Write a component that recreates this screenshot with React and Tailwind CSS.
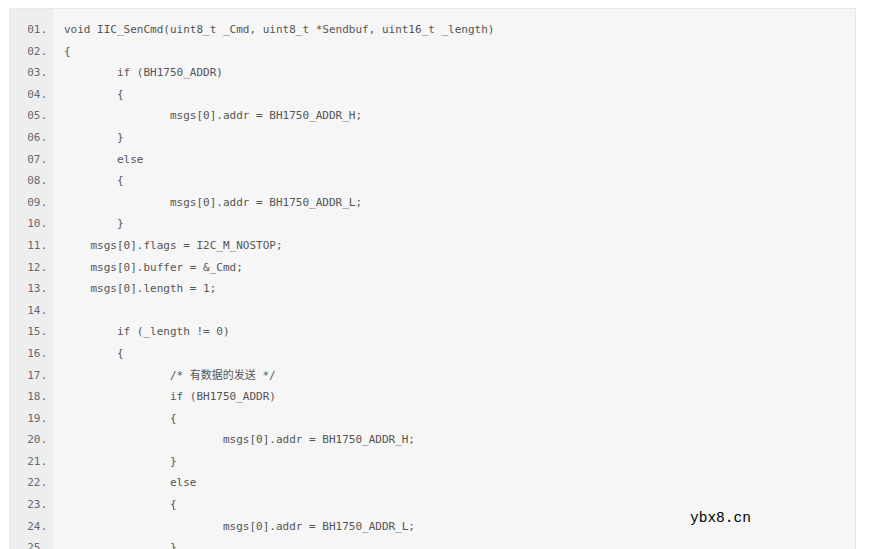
const lines = [
  "void IIC_SenCmd(uint8_t _Cmd, uint8_t *Sendbuf, uint16_t _length)",
  "{",
  "        if (BH1750_ADDR)",
  "        {",
  "                msgs[0].addr = BH1750_ADDR_H;",
  "        }",
  "        else",
  "        {",
  "                msgs[0].addr = BH1750_ADDR_L;",
  "        }",
  "    msgs[0].flags = I2C_M_NOSTOP;",
  "    msgs[0].buffer = &_Cmd;",
  "    msgs[0].length = 1;",
  "",
  "        if (_length != 0)",
  "        {",
  "                /* 有数据的发送 */",
  "                if (BH1750_ADDR)",
  "                {",
  "                        msgs[0].addr = BH1750_ADDR_H;",
  "                }",
  "                else",
  "                {",
  "                        msgs[0].addr = BH1750_ADDR_L;",
  "                }",
];

export default function App() {
  return (
    <div className="relative w-[869px] h-[549px] overflow-hidden bg-white">
      <div className="ml-[9px] mt-[8px] w-[847px] border border-[#e8e8e8] bg-[#f6f6f6] flex text-[11px] leading-[21.6px] font-['DejaVu_Sans_Mono','Noto_Sans_CJK_SC',monospace]">
        <div className="w-[43px] shrink-0 bg-[#eeeeee] pt-[10px] pr-[6px] text-right text-[#666a70]">
          {lines.map((_, i) => (
            <div key={i}>{String(i + 1).padStart(2, "0")}.</div>
          ))}
        </div>
        <div className="pl-[11px] pt-[10px] text-[#555555] whitespace-pre">
          {lines.map((l, i) => (
            <div key={i} className="h-[21.6px]">{l}</div>
          ))}
        </div>
      </div>
      <div className="absolute left-[690px] top-[510px] text-[14.5px] leading-[17px] text-black font-['Liberation_Mono',monospace]">
        ybx8.cn
      </div>
    </div>
  );
}
